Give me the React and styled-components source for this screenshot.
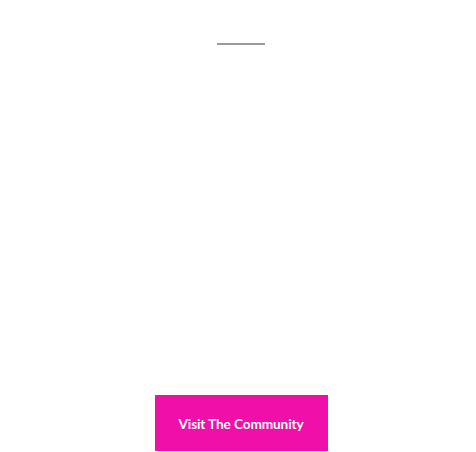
import React from "react";
import styled, { createGlobalStyle } from "styled-components";

const Global = createGlobalStyle`
  html, body { margin: 0; padding: 0; background: #fff; }
  body { font-family: "Lato", "Liberation Sans", sans-serif; }
`;

const Page = styled.div`
  width: 476px;
  height: 452px;
  box-sizing: border-box;
  padding: 43px 0 0 6px;
  display: flex;
  flex-direction: column;
  align-items: center;
  overflow: hidden;
`;

const Divider = styled.div`
  width: 48px;
  height: 2px;
  background: #999999;
`;

const Spacer = styled.div`
  flex: 1;
`;

const Button = styled.a`
  display: flex;
  align-items: center;
  justify-content: center;
  box-sizing: border-box;
  width: 173px;
  height: 56px;
  padding-top: 1px;
  margin-bottom: 1px;
  background: #f00fa8;
  color: #ffffff;
  font-family: "Lato", "Liberation Sans", sans-serif;
  font-weight: 700;
  font-size: 13.6px;
  letter-spacing: -0.1px;
  text-decoration: none;
  cursor: pointer;
`;

export default function App() {
  return (
    <>
      <Global />
      <Page>
        <Divider />
        <Spacer />
        <Button>Visit The Community</Button>
      </Page>
    </>
  );
}
